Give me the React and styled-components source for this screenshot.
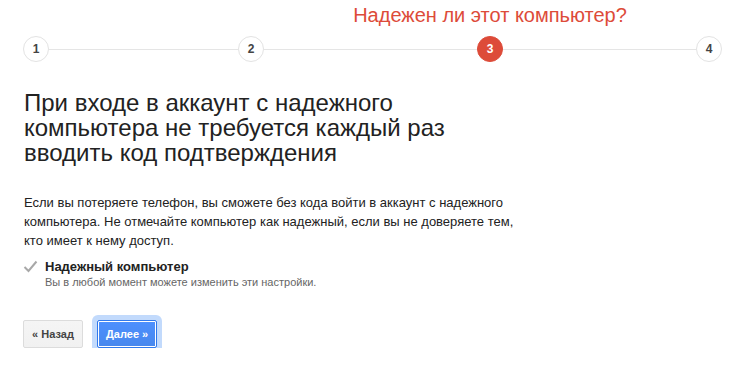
import React from "react";
import styled, { createGlobalStyle } from "styled-components";

const Global = createGlobalStyle`
  html, body { margin: 0; padding: 0; background: #fff; }
  body { font-family: "Liberation Sans", Arial, Helvetica, sans-serif; color: #222; }
`;

const Page = styled.div`
  padding: 0 24px 0 23px;
  width: 755px;
  box-sizing: border-box;
`;

const Steps = styled.div`
  display: flex;
  align-items: center;
  margin-top: 36px;
  height: 26px;
`;

const Step = styled.div`
  position: relative;
  flex: none;
  width: 26px;
  height: 26px;
  box-sizing: border-box;
  border-radius: 50%;
  border: 1px solid ${(p) => (p.$active ? "#dd4b39" : "#e3e3e3")};
  background: ${(p) => (p.$active ? "#dd4b39" : "#fff")};
  color: ${(p) => (p.$active ? "#fff" : "#444")};
  font-size: 12px;
  font-weight: bold;
  display: flex;
  align-items: center;
  justify-content: center;
`;

const StepTitle = styled.div`
  position: absolute;
  top: -34px;
  left: 50%;
  transform: translateX(-50%);
  white-space: nowrap;
  color: #dd4b39;
  font-size: 20px;
  line-height: 24px;
  font-weight: normal;
`;

const Connector = styled.div`
  flex: none;
  width: ${(p) => p.$w}px;
  height: 1px;
  background: #e5e5e5;
`;

const Heading = styled.h1`
  margin: 28px 0 0 1px;
  font-size: 24px;
  line-height: 25px;
  font-weight: normal;
  color: #222;
`;

const Text = styled.p`
  margin: 28px 0 0 1px;
  max-width: 510px;
  font-size: 13px;
  line-height: 19px;
  color: #222;
`;

const CheckRow = styled.div`
  display: flex;
  align-items: flex-start;
  gap: 7px;
  margin-top: 9px;
`;

const Check = styled.svg`
  flex: none;
  width: 15px;
  height: 13px;
  margin-top: 1px;
`;

const CheckText = styled.div`
  display: flex;
  flex-direction: column;
`;

const CheckLabel = styled.div`
  font-size: 13px;
  line-height: 16px;
  font-weight: bold;
  color: #222;
`;

const CheckHint = styled.div`
  font-size: 11px;
  line-height: 14px;
  color: #666;
`;

const Buttons = styled.div`
  display: flex;
  align-items: center;
  gap: 14px;
  margin-top: 31px;
`;

const Button = styled.button`
  height: 28px;
  min-width: 60px;
  padding: 0 8px;
  box-sizing: border-box;
  border-radius: 2px;
  font-family: inherit;
  font-size: 11px;
  font-weight: bold;
  cursor: pointer;
  border: 1px solid ${(p) => (p.$primary ? "#3079ed" : "#dcdcdc")};
  background: ${(p) =>
    p.$primary
      ? "linear-gradient(#4d90fe, #4787ed)"
      : "linear-gradient(#f5f5f5, #f1f1f1)"};
  color: ${(p) => (p.$primary ? "#fff" : "#444")};
  box-shadow: ${(p) =>
    p.$primary ? "inset 0 0 0 1px #fff, 0 0 0 5px #c2dafc" : "none"};
`;

export default function App() {
  return (
    <>
      <Global />
      <Page>
        <Steps>
          <Step>1</Step>
          <Connector $w={189} />
          <Step>2</Step>
          <Connector $w={213} />
          <Step $active>
            3<StepTitle>Надежен ли этот компьютер?</StepTitle>
          </Step>
          <Connector $w={193} />
          <Step>4</Step>
        </Steps>
        <Heading>
          При входе в аккаунт с надежного
          <br />
          компьютера не требуется каждый раз
          <br />
          вводить код подтверждения
        </Heading>
        <Text>
          Если вы потеряете телефон, вы сможете без кода войти в аккаунт с
          надежного компьютера. Не отмечайте компьютер как надежный, если вы не
          доверяете тем, кто имеет к нему доступ.
        </Text>
        <CheckRow>
          <Check viewBox="0 0 15 13">
            <path
              d="M1.5 7 L5.5 11 L13.5 1.5"
              fill="none"
              stroke="#a8a8a8"
              strokeWidth="2"
            />
          </Check>
          <CheckText>
            <CheckLabel>Надежный компьютер</CheckLabel>
            <CheckHint>Вы в любой момент можете изменить эти настройки.</CheckHint>
          </CheckText>
        </CheckRow>
        <Buttons>
          <Button>« Назад</Button>
          <Button $primary>Далее »</Button>
        </Buttons>
      </Page>
    </>
  );
}
